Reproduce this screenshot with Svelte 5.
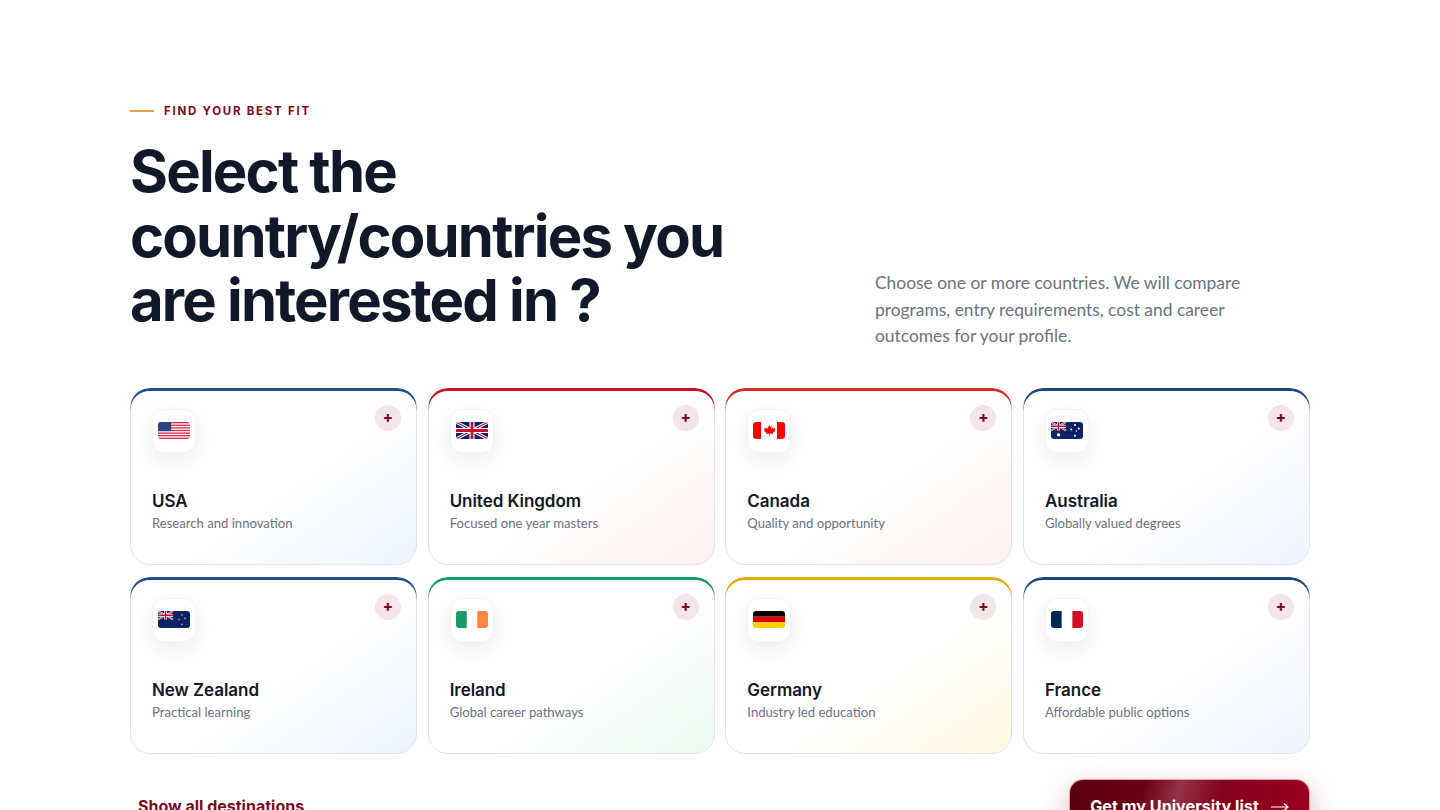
<script>
  const countries = [
    { name: 'USA', desc: 'Research and innovation', flag: 'us', accent: '#1f4e96', tint: '#edf3ff' },
    { name: 'United Kingdom', desc: 'Focused one year masters', flag: 'uk', accent: '#c8102e', tint: '#fff0f0' },
    { name: 'Canada', desc: 'Quality and opportunity', flag: 'ca', accent: '#d52b1e', tint: '#fff0f0' },
    { name: 'Australia', desc: 'Globally valued degrees', flag: 'au', accent: '#1f4488', tint: '#eff3ff' },
    { name: 'New Zealand', desc: 'Practical learning', flag: 'nz', accent: '#1f4e96', tint: '#edf3ff' },
    { name: 'Ireland', desc: 'Global career pathways', flag: 'ie', accent: '#169b62', tint: '#ecf9f2' },
    { name: 'Germany', desc: 'Industry led education', flag: 'de', accent: '#e6a800', tint: '#fff8e1' },
    { name: 'France', desc: 'Affordable public options', flag: 'fr', accent: '#1f4488', tint: '#eff3ff' }
  ];
  const stripes = [0, 2, 4, 6, 8, 10, 12];
</script>

{#snippet union()}
  <rect width="16" height="9" fill="#012169" />
  <path d="M0 0L16 9M16 0L0 9" stroke="#fff" stroke-width="2" />
  <path d="M0 0L16 9M16 0L0 9" stroke="#c8102e" stroke-width="0.8" />
  <path d="M8 0V9M0 4.5H16" stroke="#fff" stroke-width="3" />
  <path d="M8 0V9M0 4.5H16" stroke="#c8102e" stroke-width="1.6" />
{/snippet}

<main class="page">
  <header class="head">
    <div class="intro">
      <div class="eyebrow"><span class="rule"></span><span>FIND YOUR BEST FIT</span></div>
      <h1>Select the<br />country/countries you<br />are interested in ?</h1>
    </div>
    <p class="lead">Choose one or more countries. We will compare programs, entry requirements, cost and career outcomes for your profile.</p>
  </header>

  <section class="grid">
    {#each countries as c}
      <article class="card" style="--accent:{c.accent};--tint:{c.tint}">
        <span class="add">+</span>
        <div class="flagbox">
          <svg class="flag" viewBox="0 0 34 18" width="32" height="17">
            {#if c.flag === 'us'}
              <rect width="34" height="18" fill="#fff" />
              {#each stripes as y}
                <rect y={y * 1.385} width="34" height="1.385" fill="#d8274a" />
              {/each}
              <rect width="14" height="9.7" fill="#27477f" />
            {:else if c.flag === 'uk'}
              <rect width="34" height="18" fill="#012169" />
              <path d="M0 0L34 18M34 0L0 18" stroke="#fff" stroke-width="3.4" />
              <path d="M0 0L34 18M34 0L0 18" stroke="#c8102e" stroke-width="1.2" />
              <path d="M17 0V18M0 9H34" stroke="#fff" stroke-width="5.4" />
              <path d="M17 0V18M0 9H34" stroke="#c8102e" stroke-width="3" />
            {:else if c.flag === 'ca'}
              <rect width="34" height="18" fill="#fff" />
              <rect width="8.5" height="18" fill="#f00" />
              <rect x="25.5" width="8.5" height="18" fill="#f00" />
              <path d="M17 2.5l1.4 2.6 1.3-.7-.5 3.2 1.9-1.9.5 1.2 2.1-.4-.7 2.2.9.5-3 2.4.3 1.1-3.2-.4.1 2.9h-.8l.1-2.9-3.2.4.3-1.1-3-2.4.9-.5-.7-2.2 2.1.4.5-1.2 1.9 1.9-.5-3.2 1.3.7z" fill="#f00" />
            {:else if c.flag === 'au'}
              <rect width="34" height="18" fill="#0b2265" />
              {@render union()}
              <circle cx="8" cy="13.6" r="1.8" fill="#fff" />
              <circle cx="25.5" cy="3.2" r="1.1" fill="#fff" />
              <circle cx="25.5" cy="14.5" r="1.1" fill="#fff" />
              <circle cx="21.5" cy="8" r="1.1" fill="#fff" />
              <circle cx="29.5" cy="6.8" r="1.1" fill="#fff" />
              <circle cx="27" cy="9.5" r="0.7" fill="#fff" />
            {:else if c.flag === 'nz'}
              <rect width="34" height="18" fill="#0b2265" />
              {@render union()}
              <circle cx="25.5" cy="4" r="0.9" fill="#d98a9a" />
              <circle cx="25.5" cy="14.2" r="0.9" fill="#d98a9a" />
              <circle cx="22.3" cy="9" r="0.9" fill="#d98a9a" />
              <circle cx="28.8" cy="7.8" r="0.9" fill="#d98a9a" />
            {:else if c.flag === 'ie'}
              <rect width="34" height="18" fill="#fff" />
              <rect width="11.4" height="18" fill="#169b62" />
              <rect x="22.6" width="11.4" height="18" fill="#ff883e" />
            {:else if c.flag === 'de'}
              <rect width="34" height="6" fill="#000" />
              <rect y="6" width="34" height="6" fill="#d00" />
              <rect y="12" width="34" height="6" fill="#ffce00" />
            {:else}
              <rect width="34" height="18" fill="#fff" />
              <rect width="11.3" height="18" fill="#002654" />
              <rect x="22.7" width="11.3" height="18" fill="#ce1126" />
            {/if}
          </svg>
        </div>
        <h2>{c.name}</h2>
        <p class="desc">{c.desc}</p>
      </article>
    {/each}
  </section>

  <footer class="foot">
    <span class="more">Show all destinations</span>
    <button class="cta">
      <span>Get my University list</span>
      <svg class="arrow" viewBox="0 0 18 10" width="18" height="10" fill="none" stroke="#fff" stroke-width="1.2">
        <path d="M0 5H17M13 1.5L17 5L13 8.5" />
      </svg>
    </button>
  </footer>
</main>

<style>
  :global(body) {
    margin: 0;
    background: #fff;
    overflow: hidden;
    height: 810px;
  }
  .page {
    width: 1180px;
    margin: 0 auto;
    padding-top: 104px;
    font-family: 'Inter', 'Liberation Sans', sans-serif;
    color: #111827;
  }
  .head {
    display: grid;
    grid-template-columns: 1fr 435px;
    align-items: end;
    margin-bottom: 38px;
  }
  .eyebrow {
    display: flex;
    align-items: center;
    gap: 10px;
    font-size: 11.5px;
    font-weight: 700;
    letter-spacing: 1.75px;
    line-height: 14px;
    color: #7b0a1e;
    margin-bottom: 21px;
  }
  .rule {
    width: 24px;
    height: 2px;
    background: #e2a33c;
  }
  h1 {
    margin: 0 0 17px;
    font-size: 58px;
    line-height: 64.5px;
    font-weight: 700;
    letter-spacing: -1.8px;
    color: #111827;
  }
  .lead {
    margin: 0;
    font-family: 'Lato', 'Liberation Sans', sans-serif;
    font-size: 17.4px;
    line-height: 26.5px;
    color: #6b7280;
    max-width: 385px;
  }
  .grid {
    display: grid;
    grid-template-columns: repeat(4, 1fr);
    gap: 12px 10.67px;
  }
  .card {
    position: relative;
    box-sizing: border-box;
    height: 177px;
    padding: 20px 21px 0;
    border: 1px solid #e3e5ea;
    border-radius: 20px;
    background: linear-gradient(145deg, #fff 55%, var(--tint) 100%);
  }
  .card::before {
    content: '';
    position: absolute;
    top: -1px;
    left: -1px;
    right: -1px;
    height: 20px;
    border: solid var(--accent);
    border-width: 3px 1.5px 0;
    border-radius: 20px 20px 0 0;
    -webkit-mask-image: linear-gradient(#000 55%, transparent);
    mask-image: linear-gradient(#000 55%, transparent);
  }
  .add {
    position: absolute;
    top: 16px;
    right: 15px;
    width: 26px;
    height: 26px;
    border-radius: 50%;
    background: #f3e5e8;
    color: #7b0a1e;
    display: flex;
    align-items: center;
    justify-content: center;
    font-size: 15px;
    font-weight: 800;
    line-height: 1;
  }
  .flagbox {
    width: 44px;
    height: 44px;
    border-radius: 12px;
    background: #fff;
    border: 1px solid #f3f4f6;
    box-sizing: border-box;
    box-shadow: 0 8px 20px rgba(17, 24, 39, 0.08);
    display: flex;
    align-items: center;
    justify-content: center;
  }
  .flag {
    display: block;
    border-radius: 3px;
  }
  h2 {
    margin: 37px 0 0;
    font-size: 17px;
    line-height: 22px;
    font-weight: 600;
    letter-spacing: -0.05px;
    color: #111827;
  }
  .desc {
    margin: 3px 0 0;
    font-family: 'Lato', 'Liberation Sans', sans-serif;
    font-size: 13.1px;
    line-height: 17px;
    color: #6b7280;
  }
  .foot {
    display: flex;
    justify-content: space-between;
    align-items: flex-start;
    margin-top: 25px;
  }
  .more {
    margin: 17px 0 0 8px;
    font-size: 16px;
    font-weight: 700;
    line-height: 20px;
    color: #7b0a1e;
  }
  .cta {
    width: 241px;
    height: 54px;
    border: 1px solid #f0a0a0;
    border-bottom: 0;
    border-radius: 14px;
    color: #fff;
    font: 700 16.2px/20px 'Inter', 'Liberation Sans', sans-serif;
    letter-spacing: 0;
    display: flex;
    align-items: flex-start;
    justify-content: center;
    gap: 12px;
    padding: 16px 0 0;
    background:
      linear-gradient(105deg, transparent 30%, rgba(255, 255, 255, 0.2) 44%, transparent 62%),
      linear-gradient(90deg, #5a0010, #9b0022);
    box-shadow: 0 10px 30px rgba(139, 0, 30, 0.28);
  }
  .arrow {
    margin-top: 6px;
  }
</style>
